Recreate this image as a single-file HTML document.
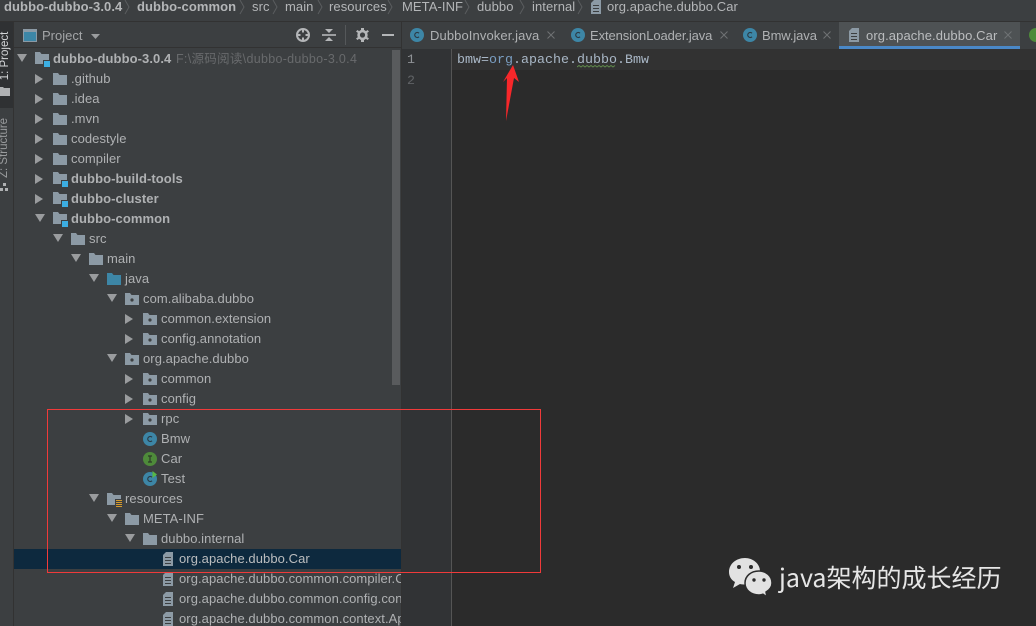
<!DOCTYPE html>
<html><head><meta charset="utf-8">
<style>
html,body{margin:0;padding:0;background:#3c3f41}
#p{position:relative;width:1036px;height:626px;overflow:hidden;background:#3c3f41;font-family:"Liberation Sans","Noto Sans CJK SC",sans-serif;font-size:13px;color:#afb1b3}
#p div,#p span.a,#p svg.a{position:absolute}
.t{white-space:nowrap;line-height:20px;height:20px;letter-spacing:.07px;margin-top:1px}
#p .b{font-weight:bold;letter-spacing:.08px}
.cr{top:-3px;line-height:20px;white-space:nowrap;color:#b4b6b8;letter-spacing:.08px}
.tab{top:26px;line-height:20px;white-space:nowrap;color:#afb1b3;letter-spacing:.1px}
</style></head><body>
<div id="p">
<svg width="0" height="0" style="position:absolute">
<defs>
<symbol id="f" viewBox="0 0 14 12"><path d="M0 0h5l1.500 2H14v10H0z" fill="#8c9aa5"/></symbol>
<symbol id="fb" viewBox="0 0 14 12"><path d="M0 0h5l1.500 2H14v10H0z" fill="#3d86a6"/></symbol>
<symbol id="pk" viewBox="0 0 14 12"><path d="M0 0h5l1.500 2H14v10H0z" fill="#8c9aa5"/><circle cx="7" cy="7" r="1.600" fill="#3c3f41"/></symbol>
<symbol id="m" viewBox="0 0 16 16"><path d="M0 0h5l1.500 2H14v10H0z" fill="#8c9aa5"/><rect x="8" y="8" width="8" height="8" fill="#3c3f41"/><rect x="9" y="9" width="6" height="6" fill="#3caee2"/></symbol>
<symbol id="ra" viewBox="0 0 8 10"><path d="M0 0l8 5-8 5z" fill="#9a9c9e"/></symbol>
<symbol id="da" viewBox="0 0 10 8"><path d="M0 0h10L5 8z" fill="#9a9c9e"/></symbol>
<symbol id="doc" viewBox="0 0 10 14"><path d="M0 3l3-3h7v14H0z" fill="#8c9aa5"/><path d="M2 5.500h6M2 8.500h6M2 11.500h6" stroke="#3c3f41" stroke-width="1"/></symbol>
<symbol id="cx" viewBox="0 0 8 8"><path d="M.5.5l7 7M7.500.5l-7 7" stroke="#6f7274" stroke-width="1" fill="none"/></symbol>
</defs>
</svg>

<!-- breadcrumb -->
<div style="left:0;top:21px;width:1036px;height:1px;background:#323232"></div>
<div class="cr b" style="left:4px">dubbo-dubbo-3.0.4</div>
<div class="cr b" style="left:137px">dubbo-common</div>
<div class="cr" style="left:252px">src</div>
<div class="cr" style="left:285px">main</div>
<div class="cr" style="left:329px">resources</div>
<div class="cr" style="left:402px">META-INF</div>
<div class="cr" style="left:477px">dubbo</div>
<div class="cr" style="left:532px">internal</div>
<div class="cr" style="left:607px">org.apache.dubbo.Car</div>
<svg class="a" style="left:0;top:0" width="640" height="16" fill="none" stroke="#5a5d5f"><path d="M125 0l4 7-4 7M240 0l4 7-4 7M273 0l4 7-4 7M318 0l4 7-4 7M388 0l4 7-4 7M465 0l4 7-4 7M520 0l4 7-4 7M578 0l4 7-4 7"/></svg>
<svg class="a" style="left:591px;top:0" width="10" height="14"><use href="#doc"/></svg>

<!-- left strip -->
<div style="left:0;top:22px;width:13px;height:604px;background:#3c3f41;border-right:1px solid #323232"></div>
<div style="left:0;top:22px;width:13px;height:86px;background:#2f3133"></div>
<div style="left:-25px;top:49px;width:60px;height:14px;line-height:14px;font-size:11.500px;color:#d4d6d8;transform:rotate(-90deg);white-space:nowrap;text-align:center">1: Project</div>
<svg class="a" style="left:0;top:86px" width="10" height="10"><path d="M0 1h3l1 1h6v8H0z" fill="#afb1b3"/></svg>
<div style="left:-26px;top:141px;width:60px;height:14px;line-height:14px;font-size:11.500px;color:#9a9c9e;transform:rotate(-90deg);white-space:nowrap;text-align:center">Z: Structure</div>
<svg class="a" style="left:0;top:183px" width="9" height="10" fill="#afb1b3"><rect x="3" y="0" width="3" height="3"/><rect x="0" y="5" width="3" height="3"/><rect x="5" y="5" width="3" height="3"/></svg>

<!-- project header -->
<div style="left:14px;top:47px;width:388px;height:1px;background:#323232"></div>
<svg class="a" style="left:23px;top:29px" width="14" height="13"><rect x=".5" y=".5" width="13" height="12" fill="#3d86a6" stroke="#8c9aa5"/><rect x="1" y="1" width="12" height="2" fill="#8c9aa5"/></svg>
<div style="left:42px;top:26px;line-height:20px;color:#a3a5a7;letter-spacing:0">Project</div>
<svg class="a" style="left:91px;top:34px" width="9" height="5"><path d="M0 0h9L4.500 5z" fill="#9a9c9e"/></svg>
<svg class="a" style="left:295px;top:27px" width="16" height="16" fill="none" stroke="#b4b6b8" stroke-width="2"><circle cx="8" cy="8" r="6"/><path d="M8 2v3.500M8 10.500V14M2 8h3.500M10.500 8H14"/></svg>
<svg class="a" style="left:322px;top:28px" width="14" height="14"><path d="M0 7h14" stroke="#b4b6b8" stroke-width="1.600"/><path d="M3 1h8L7 5zM3 13h8L7 9z" fill="#b4b6b8"/></svg>
<div style="left:345px;top:25px;width:1px;height:20px;background:#55585a"></div>
<svg class="a" style="left:356px;top:28px" width="13" height="14"><circle cx="6.500" cy="7" r="3.900" fill="none" stroke="#b4b6b8" stroke-width="2.600"/><path d="M5 0h3v2H5zM5 12h3v2H5zM0 3.500l1.500-1.500 2 1.500-1.500 1.500zM13 3.500l-1.500-1.500-2 1.500 1.500 1.500zM0 10.500l1.500 1.500 2-1.500-1.500-1.500zM13 10.500l-1.500 1.500-2-1.500 1.500-1.500z" fill="#b4b6b8"/></svg>
<div style="left:382px;top:34px;width:12px;height:2px;background:#b4b6b8"></div>

<!-- tree rows -->
<svg class="a" style="left:17px;top:54px" width="10" height="8"><use href="#da"/></svg>
<svg class="a" style="left:35px;top:52px" width="16" height="16"><use href="#m"/></svg>
<div class="t b" style="left:53px;top:48px">dubbo-dubbo-3.0.4</div>
<div class="t" style="left:176px;top:48px;color:#686a6c;font-size:12.500px;letter-spacing:.3px">F:\源码阅读\dubbo-dubbo-3.0.4</div>

<svg class="a" style="left:35px;top:74px" width="8" height="10"><use href="#ra"/></svg><svg class="a" style="left:53px;top:73px" width="14" height="12"><use href="#f"/></svg><div class="t" style="left:71px;top:68px">.github</div>
<svg class="a" style="left:35px;top:94px" width="8" height="10"><use href="#ra"/></svg><svg class="a" style="left:53px;top:93px" width="14" height="12"><use href="#f"/></svg><div class="t" style="left:71px;top:88px">.idea</div>
<svg class="a" style="left:35px;top:114px" width="8" height="10"><use href="#ra"/></svg><svg class="a" style="left:53px;top:113px" width="14" height="12"><use href="#f"/></svg><div class="t" style="left:71px;top:108px">.mvn</div>
<svg class="a" style="left:35px;top:134px" width="8" height="10"><use href="#ra"/></svg><svg class="a" style="left:53px;top:133px" width="14" height="12"><use href="#f"/></svg><div class="t" style="left:71px;top:128px">codestyle</div>
<svg class="a" style="left:35px;top:154px" width="8" height="10"><use href="#ra"/></svg><svg class="a" style="left:53px;top:153px" width="14" height="12"><use href="#f"/></svg><div class="t" style="left:71px;top:148px">compiler</div>
<svg class="a" style="left:35px;top:174px" width="8" height="10"><use href="#ra"/></svg><svg class="a" style="left:53px;top:172px" width="16" height="16"><use href="#m"/></svg><div class="t b" style="left:71px;top:168px">dubbo-build-tools</div>
<svg class="a" style="left:35px;top:194px" width="8" height="10"><use href="#ra"/></svg><svg class="a" style="left:53px;top:192px" width="16" height="16"><use href="#m"/></svg><div class="t b" style="left:71px;top:188px">dubbo-cluster</div>
<svg class="a" style="left:35px;top:214px" width="10" height="8"><use href="#da"/></svg><svg class="a" style="left:53px;top:212px" width="16" height="16"><use href="#m"/></svg><div class="t b" style="left:71px;top:208px">dubbo-common</div>
<svg class="a" style="left:53px;top:234px" width="10" height="8"><use href="#da"/></svg><svg class="a" style="left:71px;top:233px" width="14" height="12"><use href="#f"/></svg><div class="t" style="left:89px;top:228px">src</div>
<svg class="a" style="left:71px;top:254px" width="10" height="8"><use href="#da"/></svg><svg class="a" style="left:89px;top:253px" width="14" height="12"><use href="#f"/></svg><div class="t" style="left:107px;top:248px">main</div>
<svg class="a" style="left:89px;top:274px" width="10" height="8"><use href="#da"/></svg><svg class="a" style="left:107px;top:273px" width="14" height="12"><use href="#fb"/></svg><div class="t" style="left:125px;top:268px">java</div>
<svg class="a" style="left:107px;top:294px" width="10" height="8"><use href="#da"/></svg><svg class="a" style="left:125px;top:293px" width="14" height="12"><use href="#pk"/></svg><div class="t" style="left:143px;top:288px">com.alibaba.dubbo</div>
<svg class="a" style="left:125px;top:314px" width="8" height="10"><use href="#ra"/></svg><svg class="a" style="left:143px;top:313px" width="14" height="12"><use href="#pk"/></svg><div class="t" style="left:161px;top:308px">common.extension</div>
<svg class="a" style="left:125px;top:334px" width="8" height="10"><use href="#ra"/></svg><svg class="a" style="left:143px;top:333px" width="14" height="12"><use href="#pk"/></svg><div class="t" style="left:161px;top:328px">config.annotation</div>
<svg class="a" style="left:107px;top:354px" width="10" height="8"><use href="#da"/></svg><svg class="a" style="left:125px;top:353px" width="14" height="12"><use href="#pk"/></svg><div class="t" style="left:143px;top:348px">org.apache.dubbo</div>
<svg class="a" style="left:125px;top:374px" width="8" height="10"><use href="#ra"/></svg><svg class="a" style="left:143px;top:373px" width="14" height="12"><use href="#pk"/></svg><div class="t" style="left:161px;top:368px">common</div>
<svg class="a" style="left:125px;top:394px" width="8" height="10"><use href="#ra"/></svg><svg class="a" style="left:143px;top:393px" width="14" height="12"><use href="#pk"/></svg><div class="t" style="left:161px;top:388px">config</div>
<svg class="a" style="left:125px;top:414px" width="8" height="10"><use href="#ra"/></svg><svg class="a" style="left:143px;top:413px" width="14" height="12"><use href="#pk"/></svg><div class="t" style="left:161px;top:408px">rpc</div>

<svg class="a" style="left:143px;top:432px" width="14" height="14"><circle cx="7" cy="7" r="7" fill="#3d86a6"/><path d="M9 5.200A2.500 2.500 0 1 0 9 8.800" fill="none" stroke="#2b3a44" stroke-width="1.200"/></svg><div class="t" style="left:161px;top:428px">Bmw</div>
<svg class="a" style="left:143px;top:452px" width="14" height="14"><circle cx="7" cy="7" r="7" fill="#4e8a3a"/><path d="M5 4h4M5 10h4M7 4v6" stroke="#2c3a28" stroke-width="1.200"/></svg><div class="t" style="left:161px;top:448px">Car</div>
<svg class="a" style="left:143px;top:471px" width="14" height="15"><circle cx="7" cy="8" r="7" fill="#3d86a6"/><path d="M9 6.200A2.500 2.500 0 1 0 9 9.800" fill="none" stroke="#2b3a44" stroke-width="1.200"/><path d="M9.500 0l4.500 3.500-4.500 3.500z" fill="#57b846"/></svg><div class="t" style="left:161px;top:468px">Test</div>

<svg class="a" style="left:89px;top:494px" width="10" height="8"><use href="#da"/></svg><svg class="a" style="left:107px;top:493px" width="16" height="16"><path d="M0 0h5l1.500 2H14v10H0z" fill="#8c9aa5"/><path d="M8 6h8v10H8z" fill="#3c3f41"/><path d="M9 7.500h6M9 9.500h6M9 11.500h6M9 13.500h6" stroke="#d59a2b" stroke-width="1"/></svg><div class="t" style="left:125px;top:488px">resources</div>
<svg class="a" style="left:107px;top:514px" width="10" height="8"><use href="#da"/></svg><svg class="a" style="left:125px;top:513px" width="14" height="12"><use href="#f"/></svg><div class="t" style="left:143px;top:508px">META-INF</div>
<svg class="a" style="left:125px;top:534px" width="10" height="8"><use href="#da"/></svg><svg class="a" style="left:143px;top:533px" width="14" height="12"><use href="#f"/></svg><div class="t" style="left:161px;top:528px">dubbo.internal</div>

<div style="left:14px;top:549px;width:387px;height:20px;background:#0d293e"></div>
<svg class="a" style="left:163px;top:552px" width="10" height="14"><use href="#doc"/></svg><div class="t" style="left:179px;top:548px;color:#bbbdbf">org.apache.dubbo.Car</div>
<svg class="a" style="left:163px;top:572px" width="10" height="14"><use href="#doc"/></svg><div class="t" style="left:179px;top:568px;width:222px;overflow:hidden">org.apache.dubbo.common.compiler.Compiler</div>
<svg class="a" style="left:163px;top:592px" width="10" height="14"><use href="#doc"/></svg><div class="t" style="left:179px;top:588px;width:222px;overflow:hidden">org.apache.dubbo.common.config.configcenter</div>
<svg class="a" style="left:163px;top:612px" width="10" height="14"><use href="#doc"/></svg><div class="t" style="left:179px;top:608px;width:222px;overflow:hidden">org.apache.dubbo.common.context.ApplicationExt</div>

<!-- scrollbar -->
<div style="left:392px;top:50px;width:8px;height:335px;background:#595b5d"></div>
<div style="left:401px;top:22px;width:1px;height:604px;background:#323232"></div>

<!-- tabs -->
<div style="left:402px;top:22px;width:634px;height:26px;background:#3c3f41"></div>
<div style="left:839px;top:22px;width:181px;height:24px;background:#4e5254"></div>
<div style="left:839px;top:46px;width:181px;height:3px;background:#4a88c7"></div>
<svg class="a" style="left:410px;top:28px" width="14" height="14"><circle cx="7" cy="7" r="7" fill="#3d86a6"/><path d="M9 5.200A2.500 2.500 0 1 0 9 8.800" fill="none" stroke="#2b3a44" stroke-width="1.200"/></svg>
<div class="tab" style="left:430px">DubboInvoker.java</div>
<svg class="a" style="left:547px;top:31px" width="8" height="8"><use href="#cx"/></svg>
<svg class="a" style="left:571px;top:28px" width="14" height="14"><circle cx="7" cy="7" r="7" fill="#3d86a6"/><path d="M9 5.200A2.500 2.500 0 1 0 9 8.800" fill="none" stroke="#2b3a44" stroke-width="1.200"/></svg>
<div class="tab" style="left:590px;letter-spacing:-.1px">ExtensionLoader.java</div>
<svg class="a" style="left:720px;top:31px" width="8" height="8"><use href="#cx"/></svg>
<svg class="a" style="left:743px;top:28px" width="14" height="14"><circle cx="7" cy="7" r="7" fill="#3d86a6"/><path d="M9 5.200A2.500 2.500 0 1 0 9 8.800" fill="none" stroke="#2b3a44" stroke-width="1.200"/></svg>
<div class="tab" style="left:762px;letter-spacing:-.1px">Bmw.java</div>
<svg class="a" style="left:823px;top:31px" width="8" height="8"><use href="#cx"/></svg>
<svg class="a" style="left:849px;top:28px" width="10" height="14"><use href="#doc"/></svg>
<div class="tab" style="left:866px;color:#bbbdbf">org.apache.dubbo.Car</div>
<svg class="a" style="left:1004px;top:31px" width="8" height="8"><use href="#cx"/></svg>
<svg class="a" style="left:1029px;top:28px" width="7" height="14"><circle cx="7" cy="7" r="7" fill="#4e8a3a"/></svg>

<!-- editor -->
<div style="left:402px;top:49px;width:49px;height:577px;background:#313335"></div>
<div style="left:451px;top:49px;width:1px;height:577px;background:#555555"></div>
<div style="left:452px;top:49px;width:584px;height:577px;background:#2b2b2b"></div>
<div style="left:452px;top:49px;width:584px;height:21px;background:#323232"></div>
<div style="left:407px;top:51px;font:13.330px/20px 'Liberation Mono',monospace;color:#8f9296">1</div>
<div style="left:407px;top:72px;font:13.330px/20px 'Liberation Mono',monospace;color:#606366">2</div>
<div style="left:457px;top:51px;font:13.330px/20px 'Liberation Mono',monospace;color:#a9b7c6;white-space:pre">bmw=<span style="color:#7a9ec2">org</span>.apache.dubbo.Bmw</div>
<svg class="a" style="left:577px;top:65px" width="40" height="4" fill="none" stroke="#5f8a4c"><path d="M0 2l2-1.500 2 1.500 2-1.500 2 1.500 2-1.500 2 1.500 2-1.500 2 1.500 2-1.500 2 1.500 2-1.500 2 1.500 2-1.500 2 1.500 2-1.500 2 1.500 2-1.500 2 1.500 2-1.500"/></svg>

<!-- red arrow -->
<svg class="a" style="left:498px;top:64px" width="24" height="60"><path d="M15 1L21 18 16 14 8 57 9 14 5 18z" fill="#f8272a"/></svg>

<!-- red rectangle -->
<div style="left:47px;top:409px;width:492px;height:162px;border:1px solid #f03a3a"></div>

<!-- watermark -->
<svg class="a" style="left:728px;top:557px" width="46" height="40">
<path d="M17 1C8 1 1 7 1 15c0 4 2 8 6 10l-2 6 7-4c1 .3 3 .5 5 .5 8 0 15-6 15-13.500C32 7 25 1 17 1z" fill="#e2e2e2"/>
<path d="M31 14c-8 0-14 5-14 12s6 12 14 12c2 0 3-.3 4-.8l4 2.800-1-5c4-2.300 6-5.500 6-9 0-7-6-12-13-12z" fill="#e2e2e2" stroke="#2b2b2b" stroke-width="1.500"/>
<circle cx="11" cy="10" r="2" fill="#2b2b2b"/><circle cx="23" cy="10" r="2" fill="#2b2b2b"/>
<circle cx="26" cy="23" r="1.700" fill="#2b2b2b"/><circle cx="36" cy="23" r="1.700" fill="#2b2b2b"/>
</svg>
<div style="left:779px;top:561px;font:25px/32px 'Noto Sans CJK SC','Liberation Sans',sans-serif;color:#e6e6e6;white-space:nowrap">java架构的成长经历</div>
</div>
</body></html>
